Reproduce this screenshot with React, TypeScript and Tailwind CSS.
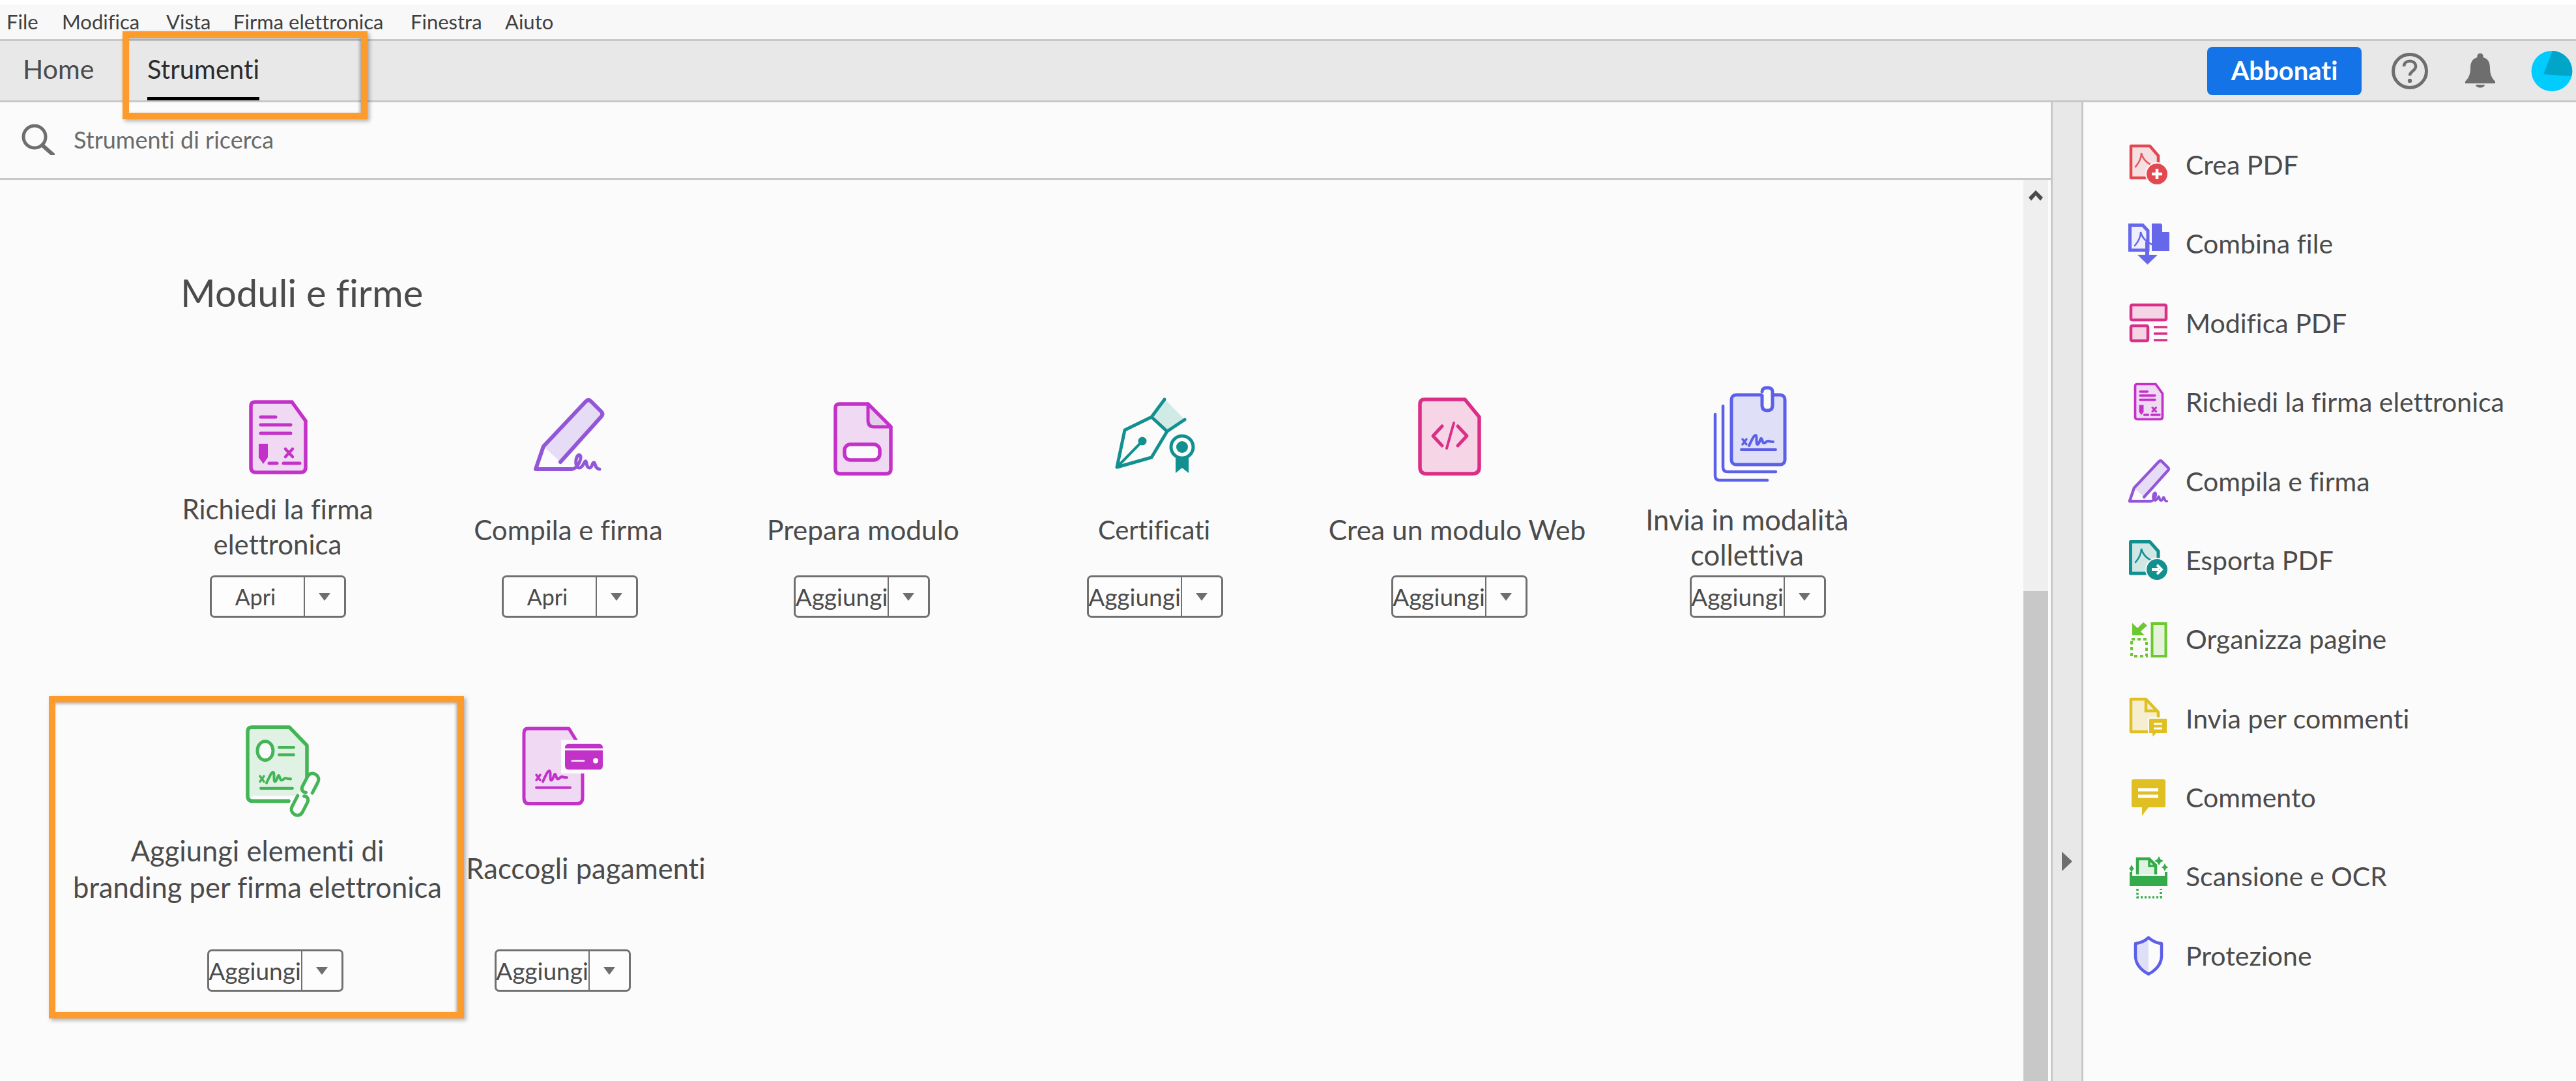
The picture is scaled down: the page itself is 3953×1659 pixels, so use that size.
import { ReactNode } from 'react';

const MAGENTA = '#c232c9';
const MAGENTA_FILL = '#f0daf3';
const PURPLE = '#9256d9';
const TEAL = '#12908f';
const PINK = '#da2e87';
const INDIGO = '#5c5fe8';
const GREEN = '#44b556';
const RED = '#e34850';
const YELLOW = '#dfbf22';
const LIME = '#6bc82e';

function Scribble({ x, y, color }: { x: number; y: number; color: string }) {
	return (
		<g transform={`translate(${x} ${y})`} fill="none" stroke={color} strokeLinecap="round" strokeLinejoin="round">
			<path d="M0 0l6 8M6 0l-6 8" strokeWidth="3.5" />
			<path d="M10 10C13 4 17-6 20-6c3 0 0 14 3 14s4-10 6-9 1 7 4 7 4-4 7-3 4 1 7 1" strokeWidth="4" />
		</g>
	);
}

function RichiediShape({ k = 1 }: { k?: number }) {
	return (
		<g fill="none" stroke={MAGENTA} strokeLinecap="round">
			<path d="M9 3H66L87 32V103Q87 111 79 111H11Q3 111 3 103V9Q3 3 9 3Z" fill={MAGENTA_FILL} strokeWidth={5.5 * k} />
			<path d="M18 26H41M18 38H64M18 51H64M31 97H43M53 97H78" strokeWidth={5 * k} />
			<path d="M15 67H29V88L22 98 15 88Z" fill={MAGENTA} stroke="none" />
			<path d="M56 75L67 87M67 75L56 87" strokeWidth={4.5 * k} />
		</g>
	);
}

function CompilaShape({ k = 1 }: { k?: number }) {
	return (
		<g fill="none" stroke={PURPLE} strokeLinecap="round" strokeLinejoin="round">
			<path d="M15 73L80 4Q84 0 88 4L104 20Q107 23 104 27L41 97Z" fill="#e6dcf6" stroke="none" />
			<path d="M41 97L104 27Q107 23 104 20L88 4Q84 0 80 4L15 73L3 108H58" strokeWidth={6 * k} />
			<path d="M58 108C68 108 76 88 70 86 64 86 62 106 70 106 76 106 78 94 80 96 82 98 80 106 86 106 90 106 90 96 93 98 95 100 94 108 101 108" strokeWidth={5 * k} />
		</g>
	);
}

function PreparaShape() {
	return (
		<g fill="none" stroke={MAGENTA} strokeLinejoin="round">
			<path d="M9 3H53L88 38V103Q88 110 81 110H10Q3 110 3 103V9Q3 3 9 3Z" fill={MAGENTA_FILL} strokeWidth="5.5" />
			<path d="M53 3V28Q53 38 62 38H88Z" fill="#e6cdea" strokeWidth="5" />
			<rect x="17" y="65" width="54" height="24" rx="9" fill="#fbfbfb" strokeWidth="5.5" />
		</g>
	);
}

function CertificatiShape() {
	return (
		<g fill="none" stroke={TEAL} strokeLinecap="round" strokeLinejoin="round">
			<path d="M75 2L106 34 80 52 55 30Z" fill="#d0ebe6" stroke="none" />
			<path d="M75 3L55 30 14 50 2 107 55 92 79 52 55 30M79 52L106 34" strokeWidth="5" />
			<path d="M2 107L40 68" strokeWidth="4" />
			<circle cx="41" cy="67" r="6.5" fill={TEAL} stroke="none" />
			<circle cx="102" cy="76" r="17" fill="#fbfbfb" strokeWidth="5" />
			<circle cx="102" cy="76" r="9" fill={TEAL} stroke="none" />
			<path d="M92 92H112V116L102 108 92 116Z" fill={TEAL} stroke="none" />
		</g>
	);
}

function CreaWebShape() {
	return (
		<g fill="none" stroke={PINK} strokeLinecap="round" strokeLinejoin="round">
			<path d="M10 3H72L94 30V107Q94 117 84 117H12Q3 117 3 107V10Q3 3 10 3Z" fill="#f6d5e7" strokeWidth="5.5" />
			<path d="M37 44L23 59 37 74M61 44L75 59 61 74" strokeWidth="5" />
			<path d="M55 39L44 78" strokeWidth="4" />
		</g>
	);
}

function InviaShape() {
	return (
		<g fill="none" stroke={INDIGO} strokeLinecap="round" strokeLinejoin="round">
			<path d="M3 44V138Q3 145 10 145H83M15 31V125Q15 132 22 132H96" strokeWidth="4.5" />
			<rect x="28" y="14" width="82" height="107" rx="7" fill="#dfe0f8" strokeWidth="5" />
			<path d="M75 9Q75 3 83 3T91 9V30Q91 38 83 38T75 30V15" fill="#fbfbfb" strokeWidth="5" />
			<path d="M43 98H96" strokeWidth="4" />
			<Scribble x={45} y={82} color={INDIGO} />
		</g>
	);
}

function BrandingShape() {
	return (
		<g transform="scale(1 1.03)" fill="none" stroke={GREEN} strokeLinecap="round" strokeLinejoin="round">
			<path d="M9 3H67L94 30V105H11Q3 113 3 105V10Q3 3 9 3Z" fill="#e0f2e3" stroke="none" />
			<path d="M66 113H11Q3 113 3 105V10Q3 3 9 3H67L94 30V78" strokeWidth="5.5" />
			<ellipse cx="30" cy="38" rx="12" ry="14" strokeWidth="5" fill="#fbfbfb" />
			<path d="M51 33H74M51 44H74M23 94H72" strokeWidth="4" />
			<Scribble x={22} y={76} color={GREEN} />
			<g transform="rotate(-62 91 103)" strokeWidth="5">
				<rect x="55" y="94" width="72" height="18" rx="9" fill="#fbfbfb" stroke="none" />
				<path d="M84 94H66C54 94 54 112 66 112H82C88 112 90 107 88 103" />
				<path d="M98 112H116C128 112 128 94 116 94H100C94 94 92 99 94 103" />
			</g>
		</g>
	);
}

function PagamentiShape() {
	return (
		<g transform="scale(1 1.03)" fill="none" stroke={MAGENTA} strokeLinecap="round" strokeLinejoin="round">
			<path d="M9 3H72L93 36V106Q93 115 84 115H11Q3 115 3 106V10Q3 3 9 3Z" fill={MAGENTA_FILL} strokeWidth="5" />
			<rect x="60" y="20" width="64" height="50" fill="#fbfbfb" stroke="none" />
			<rect x="66" y="26" width="58" height="38" rx="5" fill={MAGENTA} stroke="none" />
			<path d="M66 34H124" stroke="#fbfbfb" strokeWidth="3" />
			<path d="M77 51H95" stroke="#f0daf3" strokeWidth="3" />
			<circle cx="113" cy="51" r="4" fill="#fbfbfb" stroke="none" />
			<path d="M22 91H74" strokeWidth="4" />
			<Scribble x={22} y={72} color={MAGENTA} />
		</g>
	);
}

function AcrobatGlyph({ color }: { color: string }) {
	return (
		<path
			d="M10 34C16 27 19 19 19 13 20 19 25 27 36 32"
			fill="none"
			stroke={color}
			strokeWidth="2.5"
			strokeLinecap="round"
		/>
	);
}

function CreaPdfShape() {
	return (
		<g>
			<path d="M3 2H32L45 17V51H3Z" fill="#f5dfe0" stroke={RED} strokeWidth="4.5" strokeLinejoin="round" />
			<AcrobatGlyph color="#e05a62" />
			<circle cx="43" cy="45" r="18" fill="#fbfbfb" />
			<circle cx="43" cy="45" r="16" fill={RED} />
			<path d="M43 37V53M35 45H51" stroke="#fff" strokeWidth="4.5" />
		</g>
	);
}

function CombinaShape() {
	return (
		<g fill="#6767ec">
			<path d="M2.5 2.5H22L30 11V41H2.5Z" fill="#eeeefc" stroke="#6767ec" strokeWidth="5" />
			<path d="M36 0H50L63 14V42H36Z" />
			<path d="M52 0L63 13H52Z" fill="#fbfbfb" />
			<AcrobatGlyph color="#6767ec" />
			<rect x="26" y="28" width="6" height="22" />
			<path d="M14 48H45L29.5 63Z" />
		</g>
	);
}

function ModificaShape() {
	return (
		<g fill="#f4d5e6" stroke={PINK} strokeWidth="4.5" strokeLinejoin="round">
			<rect x="2" y="2" width="54" height="23" rx="2" />
			<rect x="2" y="34" width="26" height="23" rx="2" />
			<path d="M37 36H58M37 46H58M37 56H58" fill="none" strokeWidth="3.5" />
		</g>
	);
}

function EsportaShape() {
	return (
		<g>
			<path d="M2.5 2.5H32L45 17V51H2.5Z" fill="#d0e7e6" stroke={TEAL} strokeWidth="5" strokeLinejoin="round" />
			<AcrobatGlyph color="#12908f" />
			<circle cx="43" cy="45" r="18" fill="#fbfbfb" />
			<circle cx="43" cy="45" r="16" fill={TEAL} />
			<path d="M35 45H46M43 38L50 45 43 52" fill="none" stroke="#fff" strokeWidth="4" />
		</g>
	);
}

function OrganizzaShape() {
	return (
		<g>
			<rect x="33.5" y="2" width="21" height="50" fill="#e4f3d9" stroke={LIME} strokeWidth="4" />
			<path d="M2 26H25V52H2Z" fill="none" stroke={LIME} strokeWidth="4" strokeDasharray="5 4" />
			<path d="M3 1V20H22L16 14 26 5 20 0 11 9 3 1Z" fill={LIME} />
		</g>
	);
}

function InviaCommentiShape() {
	return (
		<g>
			<path d="M2 2H25L44 22V52H2Z" fill="#f5efcf" stroke={YELLOW} strokeWidth="4.5" strokeLinejoin="round" />
			<path d="M25 2V20H44" fill="none" stroke={YELLOW} strokeWidth="4.5" />
			<path d="M29 34Q29 31 32 31H58V55H41L35 62 34 55H29Z" fill={YELLOW} stroke="#fbfbfb" strokeWidth="2" />
			<path d="M37 40H50M37 47H50" stroke="#fff" strokeWidth="3" />
		</g>
	);
}

function CommentoShape() {
	return (
		<g>
			<path d="M3 0H49Q52 0 52 3V40Q52 43 49 43H26L16 56V43H3Q0 43 0 40V3Q0 0 3 0Z" fill={YELLOW} />
			<path d="M10 16H41M10 26H41" stroke="#fff" strokeWidth="5" />
		</g>
	);
}

function ScansioneShape() {
	return (
		<g fill="#33ab4a">
			<path d="M12 28V4H30L40 14V28" fill="#dff2e2" stroke="#33ab4a" strokeWidth="4.5" />
			<path d="M30 4V15H40" fill="none" stroke="#33ab4a" strokeWidth="3.5" />
			<path d="M0 24H4V30H54V24H58V46H0Z" />
			<path d="M12 50V63H48V50" fill="none" stroke="#33ab4a" strokeWidth="3.5" strokeDasharray="3 3" />
			<path d="M45 0L47.5 5 52 7 47.5 9.5 45 14 42.5 9.5 38 7 42.5 5ZM54 11L56 15 59 17 56 19 54 23 52 19 49 17 52 15ZM3 13L5 17 7 19 5 21 3 25 1 21 -1 19 1 17Z" />
		</g>
	);
}

function ProtezioneShape() {
	return (
		<g>
			<path d="M23 2V57C12 52 3 44 3 30V11Q14 10 23 2Z" fill="#dfe0f8" />
			<path d="M23 2Q32 10 43 11V30C43 44 34 52 23 58 12 52 3 44 3 30V11Q14 10 23 2Z" fill="none" stroke={INDIGO} strokeWidth="4.5" strokeLinejoin="round" />
		</g>
	);
}

function CardIcon({ x, y, children }: { x: number; y: number; children: ReactNode }) {
	return (
		<svg width="160" height="160" viewBox={`${-x} ${-y} 160 160`} className="shrink-0 overflow-visible">
			{children}
		</svg>
	);
}

function Caret() {
	return (
		<svg width="18" height="12" viewBox="0 0 18 12">
			<path d="M0 0H18L9 12Z" fill="#6e6e6e" />
		</svg>
	);
}

function SplitButton({ label }: { label: string }) {
	return (
		<div className="flex h-[65px] w-[209px] shrink-0 rounded-[7px] border-[3px] border-[#707070] bg-[#fdfdfd]">
			<div
				className={`flex w-[143px] items-center justify-center border-r-[2px] border-[#707070] whitespace-nowrap text-[#4b4b4b] ${
					label === 'Apri' ? 'pr-[6px] text-[34px]' : 'text-[37px]'
				}`}
			>
				{label}
			</div>
			<div className="flex flex-1 items-center justify-center">
				<Caret />
			</div>
		</div>
	);
}

const firstRow = [
	{
		width: 'w-[448px]',
		label: ['Richiedi la firma', 'elettronica'],
		labelClass: 'mb-[10px] text-[42px]',
		button: 'Apri',
		x: 36,
		y: 24,
		shape: <RichiediShape />,
	},
	{
		width: 'w-[448px]',
		label: ['Compila e firma'],
		labelClass: 'mr-[4px] text-[42px]',
		button: 'Apri',
		x: 25,
		y: 22,
		shape: <CompilaShape />,
	},
	{
		width: 'w-[449px]',
		label: ['Prepara modulo'],
		labelClass: 'ml-[4px] text-[42.5px]',
		button: 'Aggiungi',
		x: 36,
		y: 27,
		shape: <PreparaShape />,
	},
	{
		width: 'w-[450px]',
		label: ['Certificati'],
		labelClass: 'mr-[2px] text-[40px]',
		button: 'Aggiungi',
		x: 20,
		y: 20,
		shape: <CertificatiShape />,
	},
	{
		width: 'w-[484px]',
		label: ['Crea un modulo Web'],
		labelClass: 'mr-[6px] text-[42.5px]',
		button: 'Aggiungi',
		x: 17,
		y: 20,
		shape: <CreaWebShape />,
	},
	{
		width: 'w-[432px]',
		label: ['Invia in modalità', 'collettiva'],
		labelClass: 'mr-[32px] mt-[22px] text-[43.5px]',
		button: 'Aggiungi',
		x: 12,
		y: 2,
		shape: <InviaShape />,
	},
];

const secondRow = [
	{
		width: 'w-[448px]',
		label: ['Aggiungi elementi di', 'branding per firma elettronica'],
		labelClass: 'mr-[54px]',
		x: 35,
		y: 14,
		shape: <BrandingShape />,
	},
	{
		width: 'w-[434px]',
		label: ['Raccogli pagamenti'],
		labelClass: 'ml-[72px] mt-[27px]',
		x: 18,
		y: 16,
		shape: <PagamentiShape />,
	},
];

const sideTools = [
	{ label: 'Crea PDF', w: 60, h: 62, shape: <CreaPdfShape /> },
	{ label: 'Combina file', w: 63, h: 63, shape: <CombinaShape /> },
	{ label: 'Modifica PDF', w: 58, h: 59, shape: <ModificaShape /> },
	{ label: 'Richiedi la firma elettronica', w: 47, h: 57, view: '0 0 90 114', shape: <RichiediShape k={1.35} /> },
	{ label: 'Compila e firma', w: 63, h: 65, view: '0 0 107 111', shape: <CompilaShape k={1.25} /> },
	{ label: 'Esporta PDF', w: 60, h: 62, shape: <EsportaShape /> },
	{ label: 'Organizza pagine', w: 56, h: 53, shape: <OrganizzaShape /> },
	{ label: 'Invia per commenti', w: 58, h: 62, shape: <InviaCommentiShape /> },
	{ label: 'Commento', w: 52, h: 56, shape: <CommentoShape /> },
	{ label: 'Scansione e OCR', w: 59, h: 63, shape: <ScansioneShape /> },
	{ label: 'Protezione', w: 46, h: 60, shape: <ProtezioneShape /> },
];

const menuItems = [
	{ label: 'File', width: 'w-[85px]' },
	{ label: 'Modifica', width: 'w-[160px]' },
	{ label: 'Vista', width: 'w-[103px]' },
	{ label: 'Firma elettronica', width: 'w-[272px]' },
	{ label: 'Finestra', width: 'w-[145px]' },
	{ label: 'Aiuto', width: 'w-[90px]' },
];

export default function App() {
	return (
		<div className="relative flex h-[1659px] w-[3953px] flex-col overflow-hidden bg-[#fbfbfb] font-[Lato,sans-serif] text-[#4b4b4b] [font-variant-ligatures:none]">
			{/* menu bar */}
			<div className="h-[7px] bg-white" />
			<div className="flex h-[53px] items-center bg-[#f8f8f8] pl-[10px] text-[31px] text-[#3f3f3f]">
				{menuItems.map((item) => (
					<span key={item.label} className={item.width}>
						{item.label}
					</span>
				))}
			</div>

			{/* tabs */}
			<div className="flex h-[97px] items-stretch border-y-[3px] border-[#c8c8c8] bg-[#e8e8e8] pl-[35px] pr-[5px]">
				<div className="flex w-[191px] items-center pb-[5px] text-[41px]">Home</div>
				<div className="flex items-center border-b-[5px] border-black text-[40px] text-[#2c2c2c]">Strumenti</div>
				<div className="ml-auto flex items-center">
					<button className="flex h-[74px] w-[237px] items-center justify-center rounded-[8px] bg-[#1473e6] pb-[2px] text-[40px] font-bold text-white">
						Abbonati
					</button>
					<svg width="56" height="56" viewBox="0 0 56 56" className="ml-[46px]">
						<circle cx="28" cy="28" r="25.5" fill="none" stroke="#6e6e6e" strokeWidth="5" />
						<path d="M19 21C19 10 37 10 37 21 37 28 28 28 28 35" fill="none" stroke="#6e6e6e" strokeWidth="4.5" />
						<circle cx="28" cy="43" r="3.2" fill="#6e6e6e" />
					</svg>
					<svg width="46" height="54" viewBox="0 0 46 54" className="ml-[57px]">
						<path d="M23 0C27 0 28 3 27.5 6 35 8 38 14 38 22 38 31 40 37 46 43V46H0V43C6 37 8 31 8 22 8 14 11 8 18.5 6 18 3 19 0 23 0Z" fill="#6e6e6e" />
						<path d="M16 48H30C29 54 17 54 16 48Z" fill="#6e6e6e" />
					</svg>
					<svg width="64" height="62" viewBox="0 0 64 62" className="ml-[55px]">
						<ellipse cx="32" cy="31" rx="31.5" ry="31" fill="#00ccff" />
						<path d="M33 0C50 1 64 16 63 34L62 39 19 36Z" fill="#00a5c8" />
					</svg>
				</div>
			</div>

			{/* body */}
			<div className="flex min-h-0 flex-1">
				<div className="flex w-[3150px] flex-col border-r-[3px] border-[#c8c8c8]">
					<div className="flex h-[119px] shrink-0 items-center gap-[29px] border-b-[3px] border-[#c8c8c8] pl-[33px] pb-[3px] text-[36px] text-[#6a6a6a]">
						<svg width="51" height="48" viewBox="0 0 51 48">
							<circle cx="20" cy="20" r="17" fill="none" stroke="#6e6e6e" strokeWidth="5" />
							<path d="M32 33L48 47" stroke="#6e6e6e" strokeWidth="6" strokeLinecap="round" />
						</svg>
						<span>Strumenti di ricerca</span>
					</div>

					<div className="flex min-h-0 flex-1">
						<main className="min-w-0 flex-1">
							<h1 className="pl-[277px] pt-[138px] text-[58px] leading-[70px] font-normal text-[#4b4b4b]">Moduli e firme</h1>

							<div className="mt-[106px] flex pl-[202px]">
								{firstRow.map((card) => (
									<div key={card.label[0]} className={`flex flex-col items-center ${card.width}`}>
										<CardIcon x={card.x} y={card.y}>
											{card.shape}
										</CardIcon>
										<div className="flex h-[133px] items-center justify-center pb-[8px]">
											<div className={`text-center leading-[54px] whitespace-nowrap ${card.labelClass}`}>
												{card.label.map((line) => (
													<div key={line}>{line}</div>
												))}
											</div>
										</div>
										<SplitButton label={card.button} />
									</div>
								))}
							</div>

							<div className="mt-[151px] flex pl-[198px]">
								{secondRow.map((card) => (
									<div key={card.label[0]} className={`flex flex-col items-center ${card.width}`}>
										<CardIcon x={card.x} y={card.y}>
											{card.shape}
										</CardIcon>
										<div className="flex h-[198px] items-start justify-center pt-[18px]">
											<div className={`text-center text-[43.5px] leading-[56px] whitespace-nowrap ${card.labelClass}`}>
												{card.label.map((line) => (
													<div key={line}>{line}</div>
												))}
											</div>
										</div>
										<SplitButton label="Aggiungi" />
									</div>
								))}
							</div>
						</main>

						{/* scrollbar */}
						<div className="mr-[4px] flex w-[38px] shrink-0 flex-col">
							<div className="flex h-[631px] justify-center bg-[#efefef] pt-[16px]">
								<svg width="22" height="17" viewBox="0 0 22 17">
									<path d="M11 0L22 11 18 16 11 8 4 16 0 11Z" fill="#4b4b4b" />
								</svg>
							</div>
							<div className="flex-1 bg-[#c8c8c8]" />
						</div>
					</div>
				</div>

				{/* collapse handle */}
				<div className="flex w-[47px] shrink-0 justify-center border-r-[3px] border-[#c8c8c8] bg-[#e8e8e8] pt-[1150px]">
					<svg width="16" height="30" viewBox="0 0 16 30">
						<path d="M0 0L16 15 0 30Z" fill="#6e6e6e" />
					</svg>
				</div>

				{/* tool list */}
				<div className="flex flex-1 flex-col pl-[68px] pt-[35px]">
					{sideTools.map((tool) => (
						<div key={tool.label} className="flex h-[121.4px] items-center gap-[25px] text-[41px]">
							<div className="flex w-[64px] justify-center">
								<svg width={tool.w} height={tool.h} viewBox={tool.view ?? `0 0 ${tool.w} ${tool.h}`} className="overflow-visible">
									{tool.shape}
								</svg>
							</div>
							<span>{tool.label}</span>
						</div>
					))}
				</div>
			</div>

			{/* annotation boxes */}
			<div className="absolute left-[188px] top-[48px] h-[135px] w-[376px] border-[10px] border-[#fd9b2c] shadow-[3px_3px_6px_rgba(0,0,0,0.3),inset_-2px_2px_4px_rgba(0,0,0,0.3)]" />
			<div className="absolute left-[75px] top-[1068px] h-[495px] w-[637px] border-[10px] border-[#fd9b2c] shadow-[3px_3px_6px_rgba(0,0,0,0.3),inset_-2px_2px_4px_rgba(0,0,0,0.3)]" />
		</div>
	);
}
